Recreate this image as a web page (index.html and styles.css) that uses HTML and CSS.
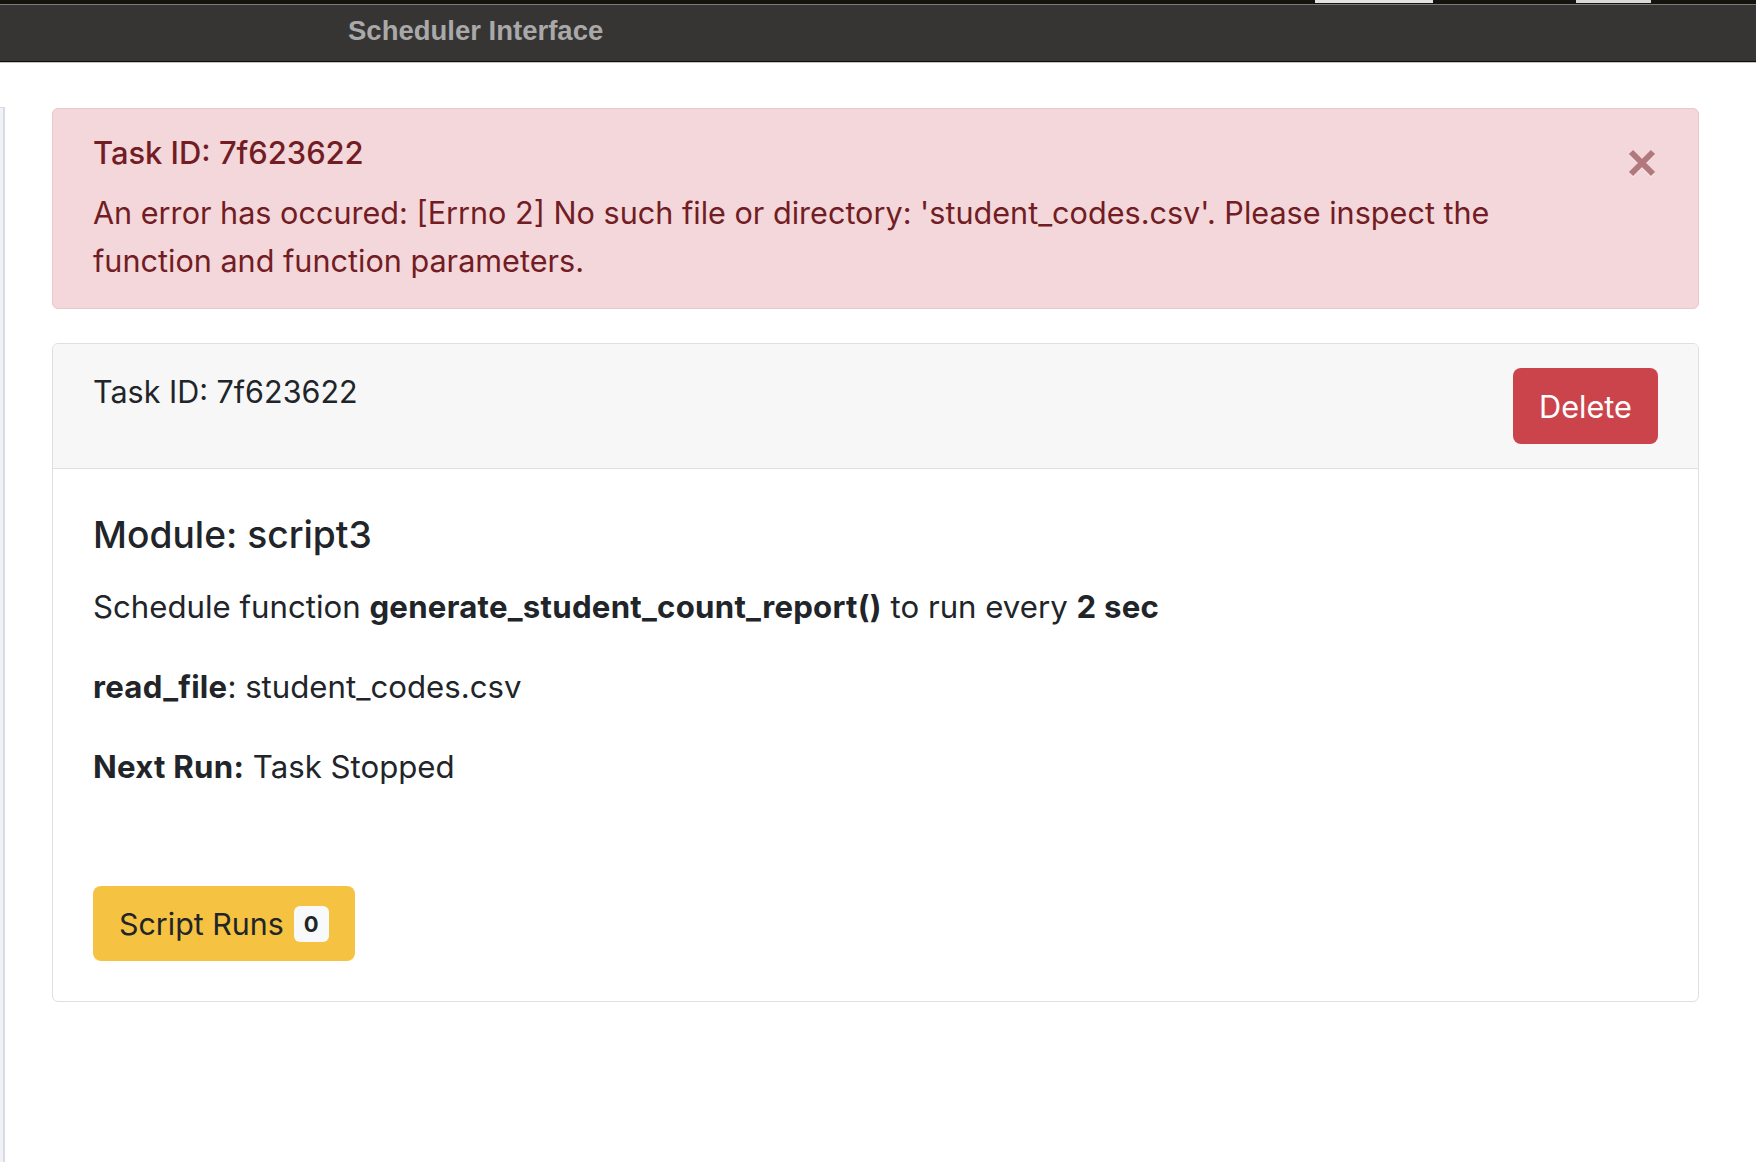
FILE: index.html
```html
<!DOCTYPE html>
<html lang="en">
<head>
<meta charset="utf-8">
<title>Scheduler Interface</title>
<link rel="stylesheet" href="styles.css">
</head>
<body>
<div class="browser-strip"><span class="strip-block strip-a"></span><span class="strip-block strip-b"></span></div>
<header class="topbar"><span class="brand">Scheduler Interface</span></header>
<div class="layout">
  <aside class="sidebar"></aside>
  <main class="content">
    <div class="alert">
      <div class="alert-body">
        <h4 class="alert-heading">Task ID: 7f623622</h4>
        <p class="alert-text">An error has occured: [Errno 2] No such file or directory: 'student_codes.csv'. Please inspect the function and function parameters.</p>
      </div>
      <button class="close" aria-label="Close">
        <svg width="28" height="28" viewBox="0 0 28 28"><g stroke-width="6" fill="none"><path class="x-shadow" d="M3 4 L25 26 M25 4 L3 26"/><path class="x-main" d="M3 3 L25 25 M25 3 L3 25"/></g></svg>
      </button>
    </div>
    <div class="card">
      <div class="card-header">
        <span class="task-id">Task ID: 7f623622</span>
        <button class="btn btn-danger">Delete</button>
      </div>
      <div class="card-body">
        <h5 class="module">Module: script3</h5>
        <p class="line">Schedule function <b>generate_student_count_report()</b> to run every <b>2 sec</b></p>
        <p class="line"><b>read_file</b>: student_codes.csv</p>
        <p class="line"><b>Next Run:</b> Task Stopped</p>
        <div class="runs"><button class="btn btn-warning"><span class="btn-label">Script Runs</span><span class="badge">0</span></button></div>
      </div>
    </div>
  </main>
</div>
</body>
</html>
```
FILE: styles.css
```css
* { box-sizing: border-box; }
html, body { margin: 0; padding: 0; background: #fff; }
body {
  font-family: Inter, "Noto Sans", sans-serif;
  color: #212529;
  min-height: 100vh;
}
.browser-strip {
  height: 5px;
  background: #15130e;
  border-bottom: 1px solid #7b7b7b;
  position: relative;
}
.strip-block { position: absolute; top: 0; height: 3px; background: #e4e4e4; }
.strip-a { left: 1315px; width: 118px; }
.strip-b { left: 1576px; width: 75px; background: #d9d9d9; }
.topbar {
  height: 57px;
  background: #363534;
  border-bottom: 1px solid #0e0e0e;
  box-shadow: 0 1px 0 #c4c4c4;
  display: flex;
  align-items: center;
  padding: 0 0 4px 348px;
}
.brand {
  font-family: "Liberation Sans", Arial, sans-serif;
  font-weight: 700;
  font-size: 27.5px;
  color: #a9a9a9;
}
.layout { display: flex; min-height: calc(100vh - 62px); margin-top: 1px; }
.sidebar {
  width: 5px;
  margin-top: 44px;
  background: #f1f2f6;
  border-top: 1px solid #d8dbe4;
  border-right: 2px solid #d8dbe4;
  flex: none;
}
.content { flex: 1; padding: 45px 57px 0 47px; }
.alert {
  display: flex;
  justify-content: space-between;
  align-items: flex-start;
  background: #f3d7da;
  border: 1px solid #efc5c9;
  border-radius: 6px;
  padding: 26px 40px 23px 40px;
  color: #721c24;
  margin-bottom: 34px;
}
.alert-heading { margin: 0 0 18px; font-size: 30.9px; font-weight: 500; line-height: 36px; }
.alert-text { margin: 0; font-size: 30.6px; line-height: 48px; max-width: 1420px; }
.close {
  background: none; border: 0; padding: 0; margin: 14px 2px 0 0;
  opacity: .5; cursor: pointer; line-height: 0;
}
.x-main { stroke: #721c24; }
.x-shadow { stroke: #ffffff; }
.card {
  border: 1px solid #dfdfdf;
  border-radius: 6px;
  overflow: hidden;
}
.card-header {
  display: flex;
  justify-content: space-between;
  align-items: flex-start;
  background: #f7f7f7;
  border-bottom: 1px solid #dfdfdf;
  padding: 24px 40px;
}
.task-id { font-size: 30.5px; line-height: 48px; }
.btn {
  border: 0;
  font-family: inherit;
  cursor: pointer;
  display: inline-flex;
  align-items: center;
}
.btn-danger {
  background: #cc444b;
  color: #fff;
  height: 76px;
  padding: 0 26px;
  border-radius: 8px;
  font-size: 30.7px;
}
.card-body { padding: 40px; }
.module { margin: 0 0 22px; font-size: 37.2px; font-weight: 500; line-height: 52px; }
.line { margin: 0 0 32px; font-size: 31.2px; line-height: 48px; }
.line b { font-weight: 700; letter-spacing: 0.25px; }
.runs { padding-top: 63px; }
.btn-warning {
  background: #f5c242;
  color: #212529;
  height: 75px;
  padding: 0 26px;
  border-radius: 8px;
  font-size: 30.4px;
}
.badge {
  margin-left: 10px;
  width: 35px;
  height: 36px;
  background: #f8f9fa;
  border-radius: 6px;
  font-size: 22px;
  font-weight: 700;
  display: inline-flex;
  align-items: center;
  justify-content: center;
}
```
